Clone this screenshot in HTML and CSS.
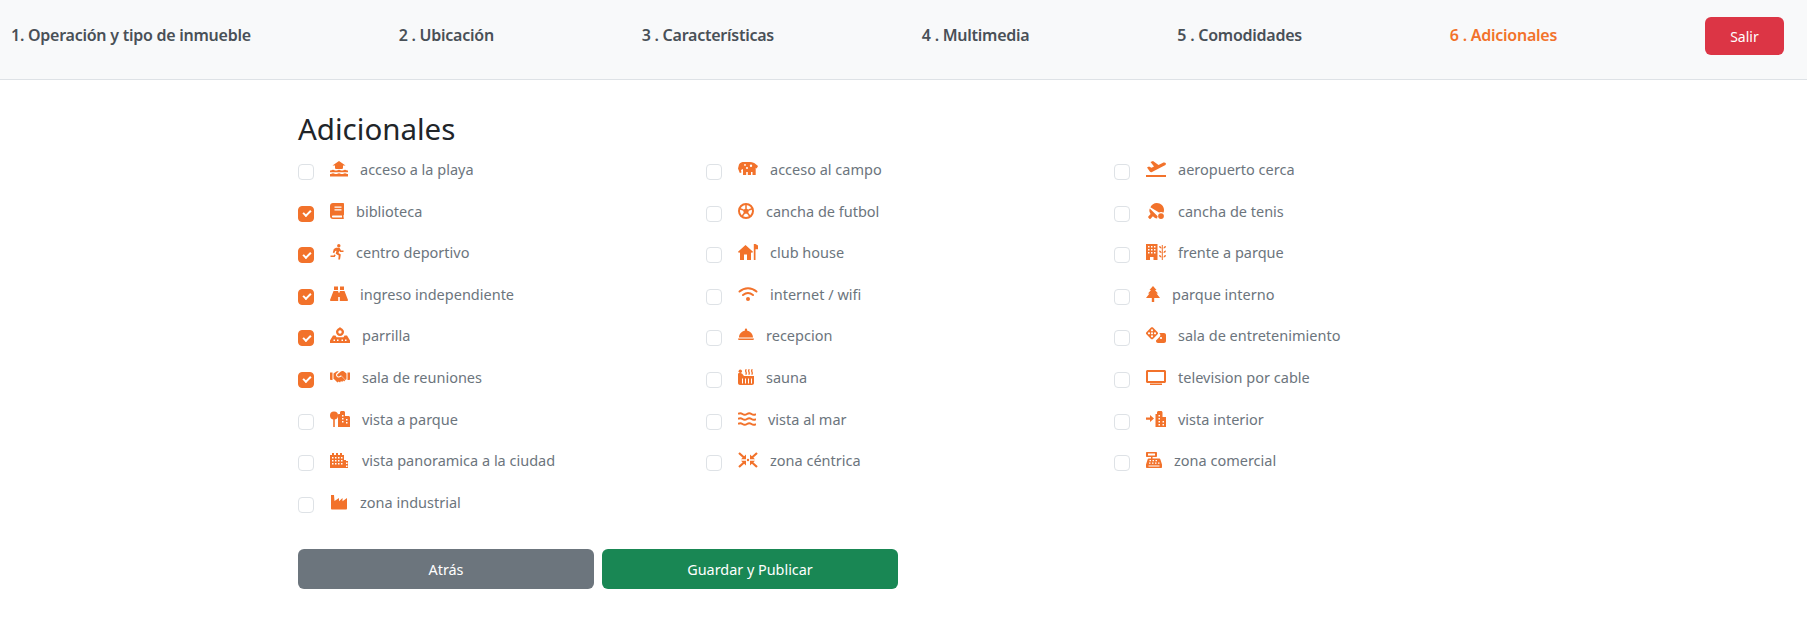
FILE: index.html
```html
<!DOCTYPE html>
<html>
	<head>
		<meta charset="UTF-8">
		<title>Adicionales</title>
		<link rel="stylesheet" href="styles.css">
	</head>
	<body>
		<nav class="steps">
			<span class="step">1. Operación y tipo de inmueble</span>
			<span class="step">2 . Ubicación</span>
			<span class="step">3 . Características</span>
			<span class="step">4 . Multimedia</span>
			<span class="step">5 . Comodidades</span>
			<span class="step active">6 . Adicionales</span>
			<a class="btn btn-exit">Salir</a>
		</nav>
		<main class="content">
			<h2 class="title">Adicionales</h2>
			<div class="options">
				<label class="opt"><i class="check"></i>
					<svg class="ico" width="18" height="16" viewBox="0 0 18 16"><path d="M9 0l6.500 4.500H13V6.500c0 .8-.4 1.500-1 1.500H6c-.6 0-1-.7-1-1.500v-2H2.500zM0 9.500c1.500 0 1.500-.8 3-.8s1.500.8 3 .8 1.500-.8 3-.8 1.500.8 3 .8 1.500-.8 3-.8 1.500.8 3 .8v1.700H0zM0 13c1.500 0 1.500-.8 3-.8s1.500.8 3 .8 1.500-.8 3-.8 1.500.8 3 .8 1.500-.8 3-.8 1.500.8 3 .8v2.500H0z"/></svg>
					<span>acceso a la playa</span></label>
				<label class="opt"><i class="check"></i>
					<svg class="ico" width="20" height="16" viewBox="0 0 20 16"><path fill-rule="evenodd" d="M1 3.500C2 1.500 4 1 6 1h6c3 0 4.500 1 5.500 2L20 5l-1.300 2.500-1-.7V14h-3.200v-3h-1.500v3H9.800v-3H8.200v3H5V8L3 9l.5 2.500-1.700.5L0 7.500zM13 3.500a1.200 1.200 0 1 0 0 2.400 1.200 1.200 0 0 0 0-2.400zM9 6a1 1 0 1 0 0 2 1 1 0 0 0 0-2zM7 3a.9.9 0 1 0 0 1.800A.9.9 0 0 0 7 3z"/></svg>
					<span>acceso al campo</span></label>
				<label class="opt"><i class="check"></i>
					<svg class="ico" width="20" height="16" viewBox="0 0 20 16"><path d="M0 14h20v2H0zM1 6.500l2-1 2.500 1.300L8 5.500 4.500 1 7 0l5.500 4 4-2c1.500-.7 3-.4 3.400.4.300.8-.3 1.600-1.400 2.200L6 11c-.8.300-1.500.2-2-.2z"/></svg>
					<span>aeropuerto cerca</span></label>

				<label class="opt"><i class="check on"></i>
					<svg class="ico" width="14" height="16" viewBox="0 0 14 16"><path fill-rule="evenodd" d="M3 0h10c.6 0 1 .4 1 1v10.500c0 .4-.2.7-.5.8v2.200c.3.200.5.500.5.800 0 .4-.4.700-1 .700H3c-1.700 0-3-1.300-3-3V3c0-1.700 1.300-3 3-3zm1.500 3.500v1.200h7V3.500zm0 2.800v1.200h7V6.300zM3 12.500c-.6 0-1 .4-1 1s.4 1 1 1h9v-2z"/></svg>
					<span>biblioteca</span></label>
				<label class="opt"><i class="check"></i>
					<svg class="ico" width="16" height="16" viewBox="0 0 16 16"><circle cx="8" cy="8" r="7" fill="none" stroke="currentColor" stroke-width="2"/><path d="M8 5l3 2.200-1.100 3.500H6.100L5 7.200z"/><path fill="none" stroke="currentColor" stroke-width="1.500" d="M8 5.500V1.500M10.500 7l3.800-1.300M9.500 10l2.400 3.300M6.500 10l-2.400 3.300M5.500 7L1.700 5.700"/></svg>
					<span>cancha de futbol</span></label>
				<label class="opt"><i class="check"></i>
					<svg class="ico tennis" width="16" height="16" viewBox="0 0 16 16"><path fill-rule="evenodd" d="M2.400 4.300C3.500 1.700 6 0 8.800 0 12.800 0 16 3.100 16 7c0 1-.2 1.900-.6 2.800-.7-.5-1.500-.8-2.400-.8-.7 0-1.400.2-2 .5zM1.800 5.500L9.700 13.300c-.5 1-.5 1.700-.5 2.200-2.300-.1-3.100-1.500-4.300-2.300l-2.300 2.500c-.3.300-.9.300-1.200 0L.3 14.600c-.3-.3-.3-.8 0-1.200l2.300-2.400C1.700 9.700.7 7.500 1.800 5.500zM13 10.200a2.900 2.900 0 1 1 0 5.800 2.900 2.900 0 0 1 0-5.800z"/></svg>
					<span>cancha de tenis</span></label>

				<label class="opt"><i class="check on"></i>
					<svg class="ico" width="14" height="16" viewBox="0 0 14 16"><circle cx="8.800" cy="1.700" r="1.700"/><path d="M6 3.700h3.500l1.600 2.800h2.400V8h-3.300L9.300 7 8.500 9l2.300 1.500-.8 5H8.300l.4-4-3-1.800.8-3-1.300.4-1 2.100-1.400-.7L3.800 5zM4.700 10.300l1 1-1 1.700H.5v-1.600h3.200z"/></svg>
					<span>centro deportivo</span></label>
				<label class="opt"><i class="check"></i>
					<svg class="ico" width="20" height="16" viewBox="0 0 20 16"><path d="M7.500 1L0 7.800 1 9l1-.8V16h4v-5.500h3V16h4V8.200l1 .8 1-1.200zM15.800 0h1.700v16h-1.700zM17.500 0L20 1.500v3.700h-2.500z"/></svg>
					<span>club house</span></label>
				<label class="opt"><i class="check"></i>
					<svg class="ico" width="20" height="16" viewBox="0 0 20 16"><path fill-rule="evenodd" d="M0 0h11.500v16H7.500v-3h-3.500v3H0zM2 2v1.500h1.500V2zm3 0v1.500h1.500V2zm3 0v1.500h1.500V2zM2 5v1.500h1.500V5zm3 0v1.500h1.500V5zm3 0v1.500h1.500V5zM2 8v1.500h1.500V8zm3 0v1.500h1.500V8zm3 0v1.500h1.500V8z"/><path d="M15.800 1v15h1V1zM13 2c1.300 0 2.500.8 2.500 2.500C14.200 4.500 13 3.700 13 2zm7 0c0 1.700-1.200 2.500-2.500 2.500C17.500 2.800 18.700 2 20 2zM13 6.500c1.300 0 2.500.8 2.500 2.500-1.300 0-2.500-.8-2.500-2.500zm7 0c0 1.700-1.200 2.500-2.500 2.500 0-1.700 1.200-2.500 2.500-2.500zM13 11c1.300 0 2.500.8 2.500 2.500-1.300 0-2.500-.8-2.500-2.500zm7 0c0 1.700-1.200 2.500-2.500 2.500 0-1.700 1.200-2.500 2.500-2.500z"/></svg>
					<span>frente a parque</span></label>

				<label class="opt"><i class="check on"></i>
					<svg class="ico" width="18" height="16" viewBox="0 0 18 16"><path d="M4 .500h4V4H4zM10 .500h4V4h-4zM3.500 5H8.200v10H.8c-.5 0-.8-.4-.8-.9zM9.800 5h4.700L18 14.100c0 .5-.3.900-.8.900H9.800zM8.200 6.500h1.600V11H8.200z"/></svg>
					<span>ingreso independiente</span></label>
				<label class="opt"><i class="check"></i>
					<svg class="ico" width="20" height="16" viewBox="0 0 20 16"><path fill="none" stroke="currentColor" stroke-width="2" stroke-linecap="round" d="M1.500 5.500c5-4.400 12-4.400 17 0M5 9c3-2.500 7-2.500 10 0"/><circle cx="10" cy="13" r="2"/></svg>
					<span>internet / wifi</span></label>
				<label class="opt"><i class="check"></i>
					<svg class="ico" width="14" height="16" viewBox="0 0 14 16"><path d="M7 0l3.500 4H9l3 3.500h-1.500L14 12H8.200v4H5.800v-4H0l3.500-4.500H2L5 4H3.500z"/></svg>
					<span>parque interno</span></label>

				<label class="opt"><i class="check on"></i>
					<svg class="ico" width="20" height="16" viewBox="0 0 20 16"><path fill-rule="evenodd" d="M10 0c.6.800 1.300 1 2.300 1.700 1 .8 1.700 2 1.700 3.300 0 2.300-1.800 4-4 4S6 7.300 6 5c0-1.300.7-2.500 1.700-3.300C8.700 1 9.400.8 10 0zm0 3.300a1.700 1.700 0 1 0 0 3.400 1.700 1.700 0 0 0 0-3.400z"/><path fill-rule="evenodd" d="M3 8.500h2.500l1 1.700h7l1-1.700H17L20 13.500V16H0v-2.500zM3.500 12.500v1.500H5v-1.500zm3.500 0v1.500h1.500v-1.500zm4.500 0v1.500H13v-1.500zm3.500 0v1.500h1.500v-1.500z"/></svg>
					<span>parrilla</span></label>
				<label class="opt"><i class="check"></i>
					<svg class="ico" width="16" height="16" viewBox="0 0 16 16"><path d="M6.800 3c0-.9.500-1.500 1.200-1.500s1.200.6 1.200 1.500v.7c3.200.5 5.800 3.100 5.800 6.800H1c0-3.700 2.600-6.300 5.800-6.800zM0 11.500h16c0 1-.7 1.500-1.500 1.500h-13C.7 13 0 12.500 0 11.500z"/></svg>
					<span>recepcion</span></label>
				<label class="opt"><i class="check"></i>
					<svg class="ico" width="20" height="16" viewBox="0 0 20 16"><g fill-rule="evenodd"><path d="M7 .6c.6-.6 1.400-.6 2 0l4.600 4.700c.6.500.6 1.400 0 2L9 11.900c-.6.600-1.400.6-2 0L2.400 7.300c-.6-.6-.6-1.500 0-2z" transform="translate(-2 0)"/><path d="M13.200 6H18c1.100 0 2 .9 2 2v6c0 1.100-.9 2-2 2h-6c-1.100 0-2-.9-2-2v-.6l3.700-3.700c1-1 1-2.500-.5-3.700z"/></g><circle cx="6" cy="3.300" r="1.100" fill="#fff"/><circle cx="3" cy="6.300" r="1.100" fill="#fff"/><circle cx="6" cy="6.300" r="1.100" fill="#fff"/><circle cx="9" cy="6.300" r="1.100" fill="#fff"/><circle cx="6" cy="9.300" r="1.100" fill="#fff"/><circle cx="15" cy="11" r="1.100" fill="#fff"/></svg>
					<span>sala de entretenimiento</span></label>

				<label class="opt"><i class="check on"></i>
					<svg class="ico" width="20" height="16" viewBox="0 0 20 16"><path d="M0 3.500h2.500v7.500H.8c-.5 0-.8-.3-.8-.8zM17.500 3.500H20v6.700c0 .5-.3.800-.8.800h-1.700zM10.500 2.800L7.500 5.300c-.7.600-.4 1.600.3 2 .8.500 1.600.3 2.200-.2l1-.8 4.500 4.800 1-.8V4.500L14 2.500c-1.300-.6-2.500-.5-3.500.3zM3.500 4.500l3-2c.8-.4 1.500-.3 2.200 0L6.700 4.300C5.500 5.300 6 7.300 7.200 8c1.200.8 2.600.600 3.600-.3l.7-.5 3.800 4-1.200 1.300-1-.9-.9 1.400-1.200-.9-1 1.300-1.300-.9-1.200 1-3.600-3.500H3.500z"/></svg>
					<span>sala de reuniones</span></label>
				<label class="opt"><i class="check"></i>
					<svg class="ico" width="16" height="16" viewBox="0 0 16 16"><circle cx="2.300" cy="2.300" r="1.700"/><path d="M0 5.200C0 4.500.6 4 1.300 4h1c.7 0 1.400.3 1.900.8l1.800 2.200H16v7c0 1.100-.9 2-2 2H2c-1.100 0-2-.9-2-2z"/><path fill="none" stroke="#fff" stroke-width="1" d="M4.500 9.500v5M7.500 9.500v5M10.500 9.500v5M13.500 9.500v5"/><path fill="none" stroke="currentColor" stroke-width="1.300" stroke-linecap="round" d="M8 .7c-1.300 1.500 1 2.500 0 4.500M11 .7c-1.300 1.500 1 2.500 0 4.500M14 .7c-1.300 1.500 1 2.500 0 4.500"/></svg>
					<span>sauna</span></label>
				<label class="opt"><i class="check"></i>
					<svg class="ico" width="20" height="16" viewBox="0 0 20 16"><path fill-rule="evenodd" d="M1.500 1h17c.8 0 1.500.7 1.500 1.500v10c0 .8-.7 1.500-1.500 1.500h-17C.7 14 0 13.300 0 12.500v-10C0 1.700.7 1 1.500 1zM2 3v9h16V3z"/><path d="M4 14.500h12V16H4z"/></svg>
					<span>television por cable</span></label>

				<label class="opt"><i class="check"></i>
					<svg class="ico" width="20" height="16" viewBox="0 0 20 16"><circle cx="4" cy="4.500" r="4"/><path d="M3.200 7h1.600v9H3.200z"/><path fill-rule="evenodd" d="M9 3h1V1.500C10 .7 10.700 0 11.500 0h2c.8 0 1.500.7 1.500 1.500V5h3.500c.8 0 1.500.7 1.500 1.500V16H8V4c0-.6.400-1 1-1zm3 1v1.500h1.500V4zm0 3v1.500h1.500V7zm4 1v1.500h1.500V8zm-4 2v1.500h1.500V10zm4 1v1.500h1.500V11z"/></svg>
					<span>vista a parque</span></label>
				<label class="opt"><i class="check"></i>
					<svg class="ico" width="18" height="16" viewBox="0 0 18 16"><path fill="none" stroke="currentColor" stroke-width="2" d="M0 3c1.500-1 3-1 4.500 0S7.500 4 9 3s3-1 4.500 0 3 1 4.500 0M0 8c1.500-1 3-1 4.500 0s3 1 4.500 0 3-1 4.500 0 3 1 4.500 0M0 13c1.500-1 3-1 4.500 0s3 1 4.500 0 3-1 4.500 0 3 1 4.500 0"/></svg>
					<span>vista al mar</span></label>
				<label class="opt"><i class="check"></i>
					<svg class="ico" width="20" height="16" viewBox="0 0 20 16"><path d="M0 6.500h4V4l4 3.500L4 11V8.700H0z"/><path fill-rule="evenodd" d="M9.500 3H11V1.500c0-.8.700-1.500 1.500-1.500H15c.8 0 1.500.7 1.500 1.500V6H20v10H9.500zm3 1v1.500H14V4zm0 3v1.500H14V7zm0 3v1.500H14V10zm4 0v1.500H18V10zm-4 3v1.500H14V13zm4 0v1.500H18V13z"/></svg>
					<span>vista interior</span></label>

				<label class="opt"><i class="check"></i>
					<svg class="ico" width="20" height="16" viewBox="0 0 20 16"><path fill-rule="evenodd" d="M0 3h2V1h2v2h2V1h2v2h2V1h2v2h2v5h2v1h2v7H0zm2 2v1.500h1.500V5zm3 0v1.500h1.500V5zm3 0v1.500h1.500V5zm3 0v1.500h1.500V5zM2 8v1.500h1.500V8zm3 0v1.500h1.500V8zm3 0v1.500h1.500V8zm3 0v1.500h1.500V8zm5 2.500V12h1.500v-1.500zM2 11v1.500h1.500V11zm3 0v1.500h1.500V11zm3 0v1.500h1.500V11zm3 0v1.500h1.500V11zm5 2.500V15h1.500v-1.500z"/></svg>
					<span>vista panoramica a la ciudad</span></label>
				<label class="opt"><i class="check"></i>
					<svg class="ico" width="20" height="16" viewBox="0 0 20 16"><path fill="none" stroke="currentColor" stroke-width="2.200" d="M1 1l5 4.500M19 1l-5 4.500M1 15l5-4.500M19 15l-5-4.500"/><path d="M8 7.200H3L8 2.500zM12 7.200h5l-5-4.700zM8 8.800H3l5 4.700zM12 8.800h5l-5 4.700z"/><circle cx="10" cy="8" r="1.200"/></svg>
					<span>zona céntrica</span></label>
				<label class="opt"><i class="check"></i>
					<svg class="ico" width="16" height="16" viewBox="0 0 16 16"><path fill-rule="evenodd" d="M1 0h9c.6 0 1 .4 1 1v3c0 .6-.4 1-1 1H6.500v1.500H13c.8 0 1.300.5 1.500 1.200L16 12.500V15c0 .6-.4 1-1 1H1c-.6 0-1-.4-1-1v-2.500L1.500 7.700c.2-.7.700-1.200 1.500-1.200h2V5H1c-.6 0-1-.4-1-1V1c0-.6.400-1 1-1zm1 1.500v2h7v-2zM3.500 8v1.300h1.500V8zm3 0v1.300H8V8zm3 0v1.300H11V8zM3 10.500v1.300h1.500v-1.300zm3 0v1.300h1.500v-1.300zm3 0v1.300h1.500v-1.300zm3 0v1.300h1.500v-1.300zM2.500 13.500v1h11v-1z"/></svg>
					<span>zona comercial</span></label>

				<label class="opt"><i class="check"></i>
					<svg class="ico" width="18" height="16" viewBox="0 0 18 16"><path d="M1 1h3l.5 6L9 4v3.200L12.500 4v3.200L17 4v10.500c0 .5-.4 1-1 1H2c-.6 0-1-.5-1-1z"/></svg>
					<span>zona industrial</span></label>
			</div>
			<div class="actions">
				<a class="btn btn-back">Atrás</a>
				<a class="btn btn-save">Guardar y Publicar</a>
			</div>
		</main>
	</body>
</html>
```

FILE: styles.css
```css
body{
	margin: 0;
	font-family: "Noto Sans", "Open Sans", sans-serif;
	background: #fff;
}
.steps{
	height: 80px;
	box-sizing: border-box;
	padding: 0 23px 7px 11px;
	display: flex;
	align-items: center;
	justify-content: space-between;
	background: #f8f9fa;
	border-bottom: 1px solid #dee2e6;
}
.step{
	padding-bottom: 3px;
	font-size: 16px;
	font-weight: 600;
	letter-spacing: -0.25px;
	color: #495057;
}
.step.active{
	color: #f2722b;
}
.btn{
	display: flex;
	align-items: center;
	justify-content: center;
	height: 40px;
	border-radius: 6px;
	color: #fff;
	font-size: 14px;
	box-sizing: border-box;
}
.btn-exit{
	width: 79px;
	height: 38px;
	background: #dc3545;
}
.content{
	width: 1224px;
	margin-left: 298px;
	padding-top: 27px;
}
.title{
	margin: 0 0 7px;
	height: 43px;
	line-height: 43px;
	font-size: 29.5px;
	font-weight: 400;
	color: #212529;
}
.options{
	display: grid;
	grid-template-columns: repeat(3, 408px);
}
.opt{
	display: flex;
	align-items: flex-start;
	height: 25.6px;
	margin-bottom: 16px;
	font-size: 14.5px;
	line-height: 25.6px;
	color: #6c757d;
}
.check{
	width: 16px;
	height: 16px;
	margin: 7px 16px 0 0;
	box-sizing: border-box;
	border: 1px solid #dee2e6;
	border-radius: 4px;
	flex: none;
	position: relative;
}
.check.on{
	background: #f2722b;
	border-color: #f2722b;
}
.check.on::after{
	content: "";
	position: absolute;
	left: 4px;
	top: 3.5px;
	width: 6px;
	height: 3px;
	border-left: 2px solid #fff;
	border-bottom: 2px solid #fff;
	transform: rotate(-45deg);
}
.ico{
	margin: 4px 12px 0 0;
	flex: none;
	fill: #f2722b;
	color: #f2722b;
}
.ico.tennis{
	margin-left: 2px;
	margin-right: 14px;
}
.actions{
	display: flex;
	gap: 8px;
	margin-top: 18px;
}
.actions .btn{
	width: 296px;
	font-size: 14.4px;
}
.btn-back{
	background: #6c757d;
}
.btn-save{
	background: #198754;
}
```
